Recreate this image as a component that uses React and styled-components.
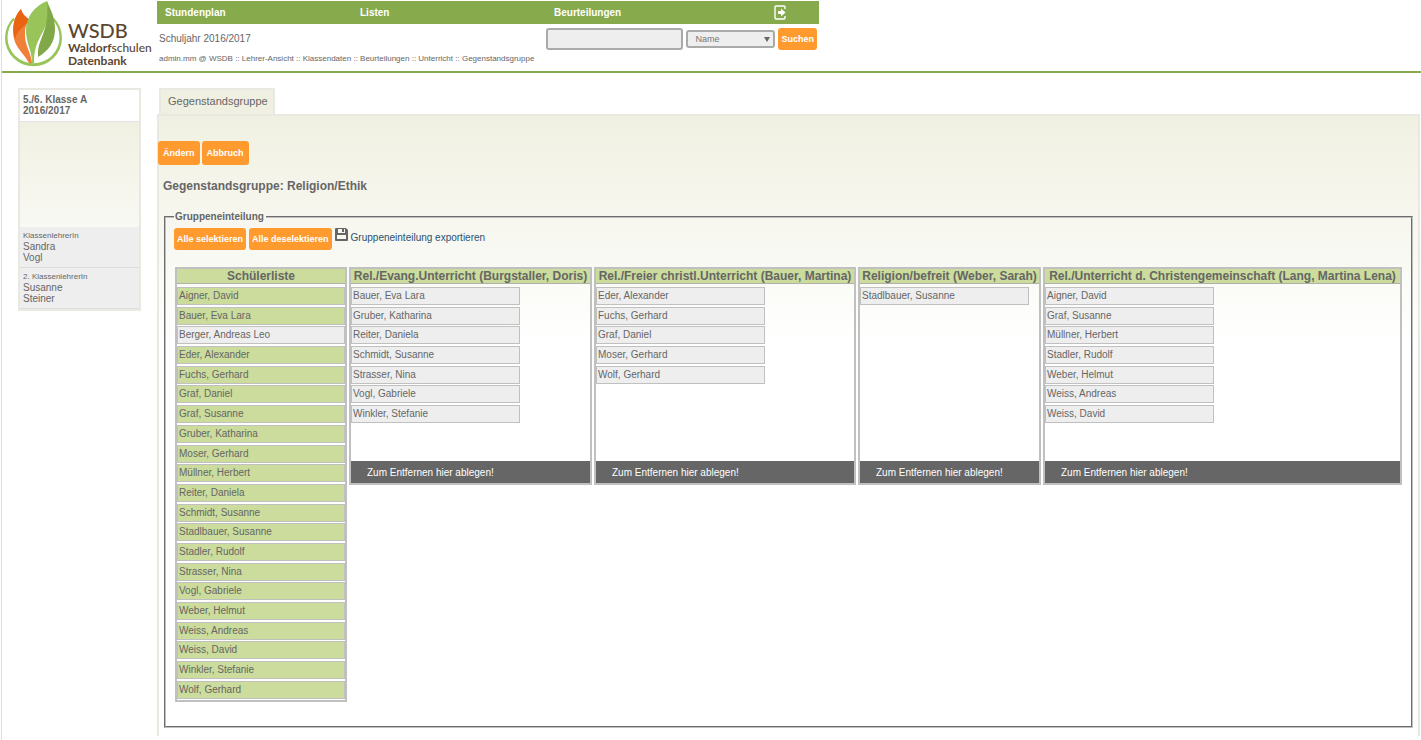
import styled, { createGlobalStyle } from "styled-components";

const students = [
  "Aigner, David",
  "Bauer, Eva Lara",
  "Berger, Andreas Leo",
  "Eder, Alexander",
  "Fuchs, Gerhard",
  "Graf, Daniel",
  "Graf, Susanne",
  "Gruber, Katharina",
  "Moser, Gerhard",
  "Müllner, Herbert",
  "Reiter, Daniela",
  "Schmidt, Susanne",
  "Stadlbauer, Susanne",
  "Stadler, Rudolf",
  "Strasser, Nina",
  "Vogl, Gabriele",
  "Weber, Helmut",
  "Weiss, Andreas",
  "Weiss, David",
  "Winkler, Stefanie",
  "Wolf, Gerhard",
];

const groups = [
  {
    title: "Rel./Evang.Unterricht (Burgstaller, Doris)",
    members: [
      "Bauer, Eva Lara",
      "Gruber, Katharina",
      "Reiter, Daniela",
      "Schmidt, Susanne",
      "Strasser, Nina",
      "Vogl, Gabriele",
      "Winkler, Stefanie",
    ],
  },
  {
    title: "Rel./Freier christl.Unterricht (Bauer, Martina)",
    members: [
      "Eder, Alexander",
      "Fuchs, Gerhard",
      "Graf, Daniel",
      "Moser, Gerhard",
      "Wolf, Gerhard",
    ],
  },
  {
    title: "Religion/befreit (Weber, Sarah)",
    members: ["Stadlbauer, Susanne"],
  },
  {
    title: "Rel./Unterricht d. Christengemeinschaft (Lang, Martina Lena)",
    members: [
      "Aigner, David",
      "Graf, Susanne",
      "Müllner, Herbert",
      "Stadler, Rudolf",
      "Weber, Helmut",
      "Weiss, Andreas",
      "Weiss, David",
    ],
  },
];

const assigned = new Set(groups.flatMap((group) => group.members));

const LogoMark = () => (
  <svg width="60" height="68" viewBox="4 0 60 68" aria-hidden="true">
    <path
      d="M13 18A28.5 28.5 0 1 0 54 18L52 19A26 26 0 1 1 15 19Z"
      fill="#98c45a"
    />
    <path
      d="M21 9C13 18 11 31 15 42C18 50 25 55 29 63H32C31 52 24 45 25 32C25 26 28 22 30 20C26 18 22 14 21 9Z"
      fill="#f08038"
    />
    <path
      d="M21 9C13 17 12 29 15 39C17 31 23 27 26 24C27 22 29 21 30 20C26 17 22 14 21 9Z"
      fill="#e96311"
    />
    <path
      d="M47 1C35 6 26 16 26 31C26 43 32 50 32 63H34C35 52 38 49 44 44L52 36L49 12Z"
      fill="#98c45a"
    />
    <path
      d="M47 1C48 16 47 26 42 35C38 42 37 48 38 57C48 51 55 43 55 29C55 16 50 9 47 1Z"
      fill="#80a748"
    />
    <path
      d="M46 24C43 35 34 42 34 62L38 57C37 44 43 38 46 24Z"
      fill="#fff"
    />
  </svg>
);

const LogoutIcon = () => (
  <svg width="13" height="15" viewBox="0 0 13 15" aria-hidden="true">
    <path
      d="M11 4V2Q11 1 10 1H2Q1 1 1 2V13Q1 14 2 14H10Q11 14 11 13V11"
      fill="none"
      stroke="#fff"
      strokeWidth="1.4"
    />
    <path d="M4 6H7V3.500L11.500 7.500L7 11.500V9H4Z" fill="#fff" />
  </svg>
);

const SaveIcon = () => (
  <svg width="13" height="13" viewBox="0 0 13 13" aria-hidden="true">
    <path
      fillRule="evenodd"
      d="M1 0H11L13 2V12Q13 13 12 13H1Q0 13 0 12V1Q0 0 1 0ZM3 1V5H10V1ZM2 7V11H11V7Z"
      fill="#666"
    />
    <path d="M7 1H9V4H7Z" fill="#666" />
  </svg>
);

const App = () => (
  <>
    <GlobalStyle />
    <Page>
      <Header>
        <Logo href="#">
          <LogoMark />
          <LogoText>
            <LogoName>WSDB</LogoName>
            <LogoLine>
              <b>Waldorf</b>schulen
            </LogoLine>
            <LogoLine>
              <b>Datenbank</b>
            </LogoLine>
          </LogoText>
        </Logo>
        <HeaderMain>
          <Nav>
            <NavLink href="#">Stundenplan</NavLink>
            <NavLink href="#">Listen</NavLink>
            <NavLink href="#">Beurteilungen</NavLink>
            <Logout href="#" aria-label="Abmelden">
              <LogoutIcon />
            </Logout>
          </Nav>
          <SearchRow>
            <Year>Schuljahr 2016/2017</Year>
            <SearchInput type="text" aria-label="Suchbegriff" />
            <SelectWrap>
              <SearchSelect aria-label="Suchen nach">
                <option>Name</option>
              </SearchSelect>
            </SelectWrap>
            <Button>Suchen</Button>
          </SearchRow>
          <Breadcrumb>
            admin.mm @ WSDB :: Lehrer-Ansicht :: Klassendaten :: Beurteilungen
            :: Unterricht :: Gegenstandsgruppe
          </Breadcrumb>
        </HeaderMain>
      </Header>
      <Body>
        <Sidebar>
          <ClassName>
            5./6. Klasse A<br />
            2016/2017
          </ClassName>
          <SidebarSpace />
          <Teacher>
            <small>KlassenlehrerIn</small>
            Sandra
            <br />
            Vogl
          </Teacher>
          <Teacher>
            <small>2. KlassenlehrerIn</small>
            Susanne
            <br />
            Steiner
          </Teacher>
        </Sidebar>
        <Content>
          <Tab href="#">Gegenstandsgruppe</Tab>
          <Panel>
            <Actions>
              <Button $tall>Ändern</Button>
              <Button $tall>Abbruch</Button>
            </Actions>
            <Title>Gegenstandsgruppe: Religion/Ethik</Title>
            <Fieldset>
              <legend>Gruppeneinteilung</legend>
              <Tools>
                <Button>Alle selektieren</Button>
                <Button>Alle deselektieren</Button>
                <ExportLink href="#">
                  <SaveIcon />
                  <span>Gruppeneinteilung exportieren</span>
                </ExportLink>
              </Tools>
              <Columns>
                <Column>
                  <ColumnTitle>Schülerliste</ColumnTitle>
                  <StudentList>
                    {students.map((name) => (
                      <Student key={name} $assigned={assigned.has(name)}>
                        {name}
                      </Student>
                    ))}
                  </StudentList>
                </Column>
                {groups.map(({ title, members }) => (
                  <Column key={title}>
                    <ColumnTitle>{title}</ColumnTitle>
                    <MemberList>
                      {members.map((name) => (
                        <Student key={name}>{name}</Student>
                      ))}
                    </MemberList>
                    <DropZone>Zum Entfernen hier ablegen!</DropZone>
                  </Column>
                ))}
              </Columns>
            </Fieldset>
          </Panel>
        </Content>
      </Body>
    </Page>
  </>
);

export default App;

const GlobalStyle = createGlobalStyle`
  * {
    box-sizing: border-box;
  }
  body {
    margin: 0;
    background: #fff;
    color: #666;
    font: 10px/12px "Liberation Sans", Arial, sans-serif;
  }
  a {
    color: inherit;
    text-decoration: none;
  }
`;

const Page = styled.div`
  min-height: 100vh;
  margin-left: 1px;
  border-left: 1px solid #ddd;
`;

const Header = styled.header`
  display: flex;
  height: 73px;
  border-bottom: 2px solid #87aa4d;
`;

const Logo = styled.a`
  display: flex;
  flex: none;
  width: 155px;
  padding-left: 2px;
  color: #5b4630;
`;

const LogoText = styled.span`
  padding: 19px 0 0 4px;
  font-family: Lato, sans-serif;
  font-weight: 500;
`;

const LogoName = styled.span`
  display: block;
  font-size: 20px;
  line-height: 22px;
`;

const LogoLine = styled.span`
  display: block;
  font-size: 12px;
  line-height: 13px;
  white-space: nowrap;
`;

const HeaderMain = styled.div`
  width: 662px;
  padding-top: 1px;
`;

const Nav = styled.nav`
  display: grid;
  grid-template-columns: 195px 194px 220px auto;
  align-items: center;
  height: 23px;
  padding-left: 8px;
  background: #87aa4d;
  color: #fff;
`;

const NavLink = styled.a`
  font-weight: bold;
`;

const Logout = styled.a`
  display: flex;
`;

const SearchRow = styled.div`
  display: flex;
  align-items: center;
  gap: 3px;
  padding: 4px 2px 3px;
`;

const Year = styled.span`
  flex: 1;
`;

const SearchInput = styled.input`
  width: 137px;
  height: 22px;
  border: 2px solid #aaa;
  border-radius: 3px;
  background: #eee;
`;

const SelectWrap = styled.span`
  position: relative;
  display: flex;

  &::after {
    content: "";
    position: absolute;
    top: 7px;
    right: 5px;
    border: solid transparent;
    border-width: 5px 3px 0;
    border-top-color: #666;
    pointer-events: none;
  }
`;

const SearchSelect = styled.select`
  width: 89px;
  height: 18px;
  padding: 0 7px;
  appearance: none;
  border: 2px solid #aaa;
  border-radius: 3px;
  background: #eee;
  color: #777;
  font: 9px "Liberation Sans", Arial, sans-serif;
`;

const Button = styled.button`
  height: ${({ $tall }) => ($tall ? "24px" : "22px")};
  padding: 0 ${({ $tall }) => ($tall ? "5px" : "3px")};
  border: none;
  border-radius: 3px;
  background: #ff9a2e;
  color: #fff;
  font: bold 9px "Liberation Sans", Arial, sans-serif;
  white-space: nowrap;
  cursor: pointer;
`;

const Breadcrumb = styled.div`
  padding-left: 2px;
  font-size: 8px;
  white-space: nowrap;
`;

const Body = styled.div`
  display: flex;
  align-items: flex-start;
  gap: 16px;
  padding: 15px 1px 4px 16px;
`;

const Sidebar = styled.aside`
  flex: none;
  width: 123px;
  border: 2px solid #e9e9e2;
`;

const ClassName = styled.div`
  padding: 4px 3px 5px;
  border-bottom: 1px solid #e2e2e2;
  font-weight: bold;
  line-height: 11px;
`;

const SidebarSpace = styled.div`
  height: 105px;
  background: linear-gradient(#f0f0e2, #f9f9f4);
`;

const Teacher = styled.div`
  padding: 3px 3px 4px;
  border-bottom: 1px solid #ddd;
  background: #eee;
  line-height: 11px;

  small {
    display: block;
    font-size: 8px;
  }
`;

const Content = styled.main`
  display: flex;
  flex: 1;
  flex-direction: column;
  align-items: flex-start;
`;

const Tab = styled.a`
  margin-left: 2px;
  padding: 5px 5px 7px 7px;
  border: 2px solid #e9e9e2;
  border-bottom: none;
  background: #f0f0e2;
  font-size: 11px;
`;

const Panel = styled.section`
  align-self: stretch;
  padding: 25px 5px 8px;
  border: solid #e9e9e2;
  border-width: 2px 2px 0;
  background: linear-gradient(#f0f0e2, #fff 230px);
`;

const Actions = styled.div`
  display: flex;
  gap: 2px;
  margin-left: -6px;
`;

const Title = styled.h1`
  margin: 14px 0 17px -1px;
  font-size: 12px;
  line-height: 15px;
`;

const Fieldset = styled.fieldset`
  min-width: 0;
  margin: 0;
  padding: 5px 9px 24px 8px;
  border: 2px groove #c0c0c0;

  legend {
    padding: 0 2px 0 1px;
    font-weight: bold;
  }
`;

const Tools = styled.div`
  display: flex;
  gap: 3px;
`;

const ExportLink = styled.a`
  display: flex;
  gap: 3px;
  color: #2a5070;

  span {
    padding-top: 4px;
  }
`;

const Columns = styled.div`
  display: grid;
  grid-template-columns: 172fr 243fr 262fr 183fr 359fr;
  align-items: start;
  gap: 2px;
  margin: 17px 0 0 1px;
`;

const Column = styled.section`
  border: 2px solid #c0c0c0;
`;

const ColumnTitle = styled.h2`
  margin: 0;
  border-bottom: 1px solid #b0b0a8;
  background: #cbdc9c;
  font-size: 12px;
  line-height: 14px;
  text-align: center;
  white-space: nowrap;
`;

const StudentList = styled.ul`
  display: grid;
  grid-template-rows: repeat(21, 18px);
  align-content: space-between;
  min-height: 412px;
  margin: 3px 0 1px;
  padding: 0;
  list-style: none;
`;

const MemberList = styled(StudentList)`
  grid-template-rows: repeat(7, 18px);
  grid-template-columns: 169px;
  min-height: 136px;
  margin-bottom: 38px;
`;

const Student = styled.li`
  padding-left: 1px;
  border: 1px solid #c0c0c0;
  background: ${({ $assigned }) => ($assigned ? "#cbdc9c" : "#eee")};
  line-height: 16px;
`;

const DropZone = styled.div`
  padding: 2px 0 0 16px;
  background: #666;
  color: #fff;
  line-height: 20px;
`;
